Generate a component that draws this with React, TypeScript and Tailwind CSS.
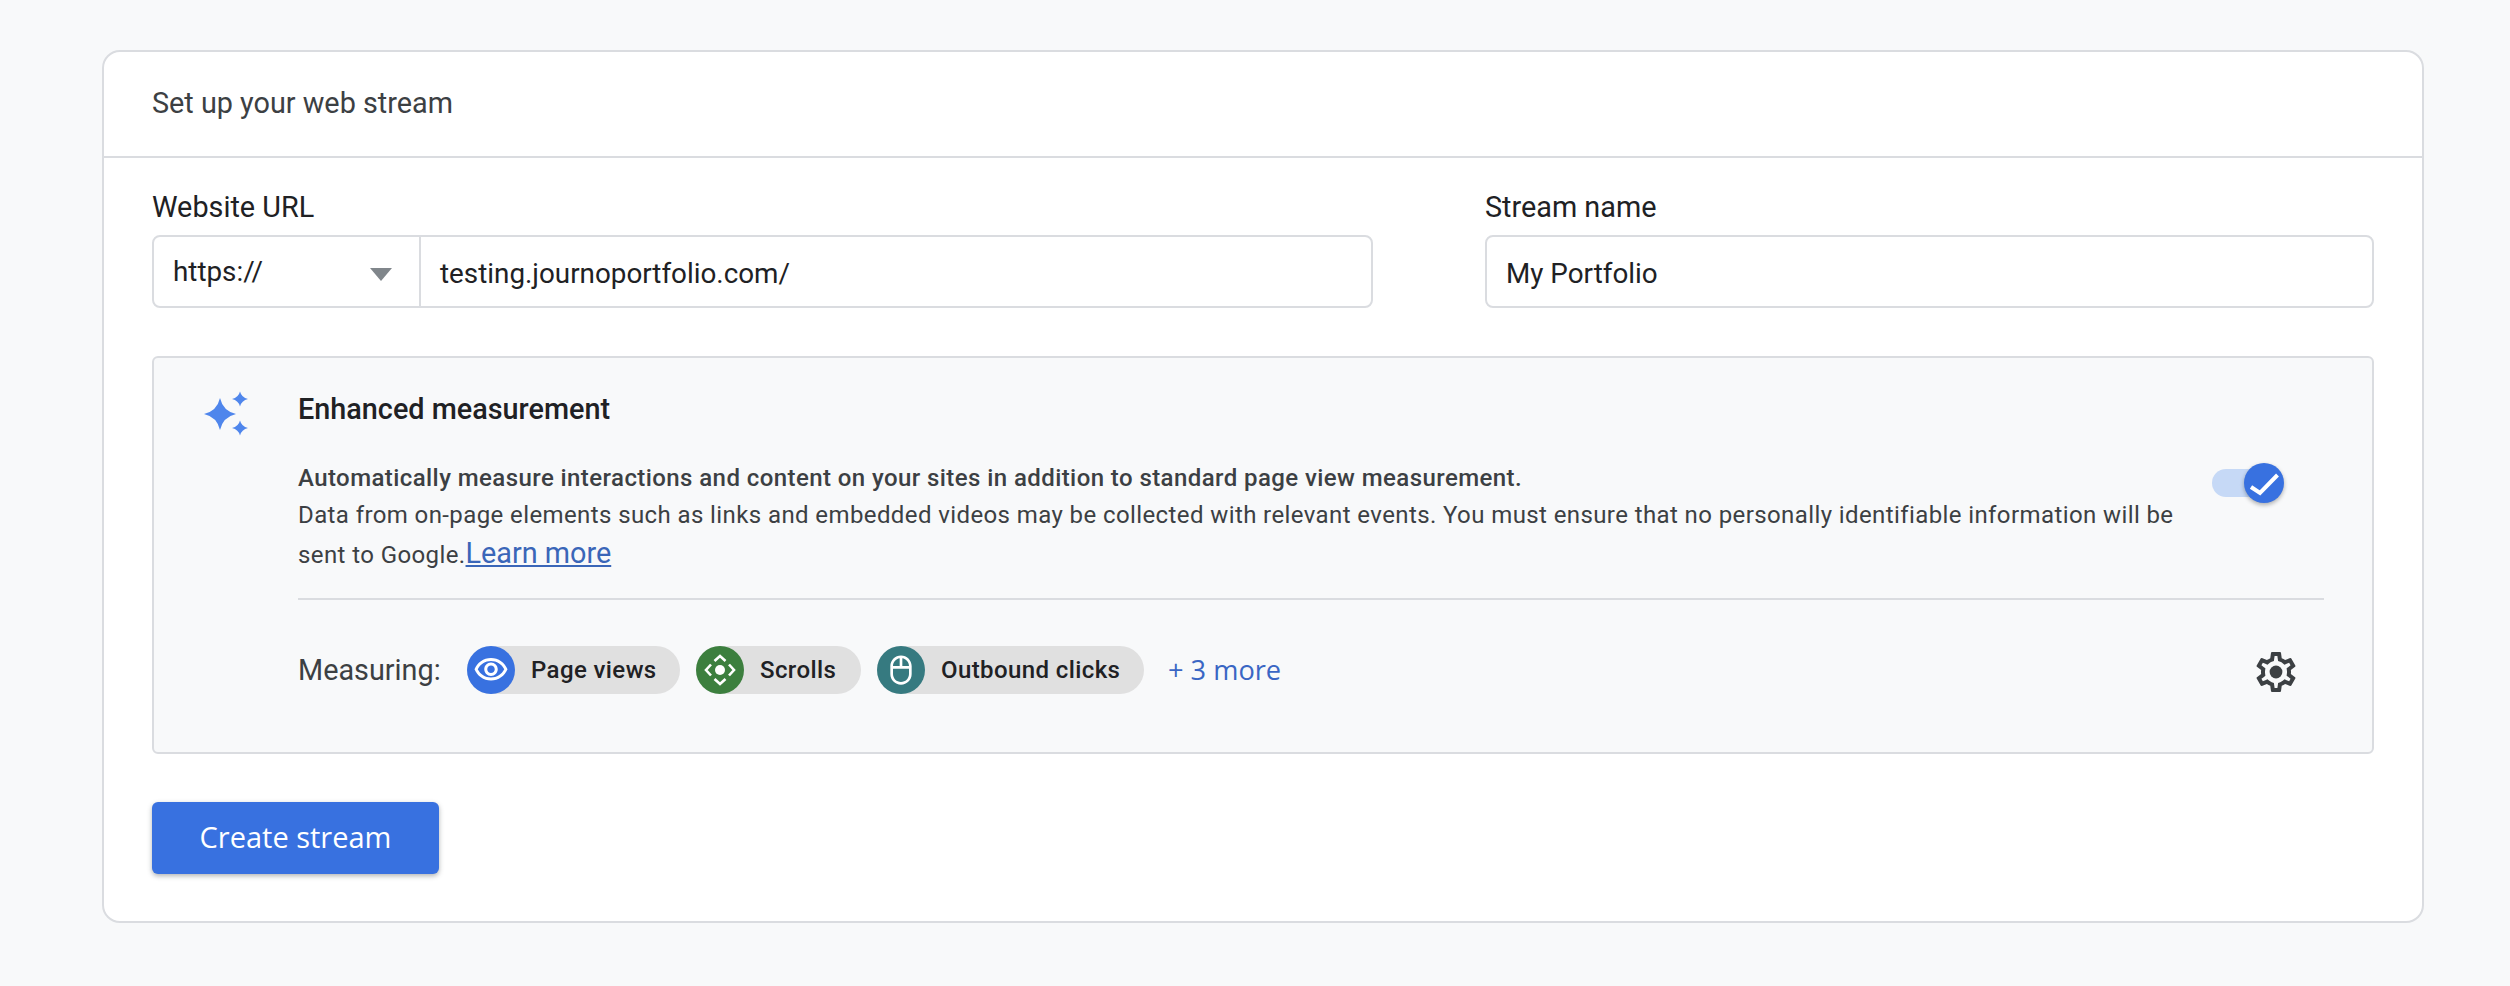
import React from "react";

const roboto = "font-['Roboto',sans-serif]";

function Chip({ color, label, width, children }: { color: string; label: string; width: string; children: React.ReactNode }) {
  return (
    <div className={`flex h-[48px] items-center rounded-full bg-[#e0e0e0] ${width}`}>
      <div className={`flex h-[48px] w-[48px] shrink-0 items-center justify-center rounded-full ${color}`}>{children}</div>
      <span className="ml-[16px] text-[24px] leading-[48px] font-medium tracking-[0.4px] whitespace-nowrap text-[#202124]">{label}</span>
    </div>
  );
}

export default function App() {
  return (
    <div className={`min-h-[986px] bg-[#f8f9fa] pt-[50px] pl-[102px] ${roboto}`}>
      <div className="h-[873px] w-[2322px] rounded-[18px] border-2 border-[#dadce0] bg-white">
        <div className="flex h-[106px] items-center border-b-2 border-[#dadce0] pr-[46px] pl-[48px] text-[28.8px] text-[#3c4043]">
          Set up your web stream
        </div>
        <div className="pr-[46px] pl-[48px]">
          <div className="flex gap-[112px] pt-[30px]">
            <div className="w-[1221px]">
              <div className="h-[38px] text-[28.8px] leading-[38px] text-[#202124]">Website URL</div>
              <div className="mt-[9px] flex h-[73px] rounded-[8px] border-2 border-[#dadce0] text-[27.8px] text-[#202124]">
                <div className="flex w-[267px] items-center justify-between border-r-2 border-[#dadce0] pt-[1px] pr-[27px] pl-[19px]">
                  <span>https://</span>
                  <svg width="22" height="13" viewBox="0 0 22 13" className="mt-[4px]"><path d="M0 0h22L11 13z" fill="#80868b" /></svg>
                </div>
                <div className="flex flex-1 items-center pt-[5px] pl-[19px]">testing.journoportfolio.com/</div>
              </div>
            </div>
            <div className="w-[889px]">
              <div className="h-[38px] text-[28.8px] leading-[38px] text-[#202124]">Stream name</div>
              <div className="mt-[9px] flex h-[73px] items-center rounded-[8px] border-2 border-[#dadce0] pt-[5px] pl-[19px] text-[27.8px] text-[#202124]">My Portfolio</div>
            </div>
          </div>

          <div className="mt-[48px] flex h-[398px] w-[2222px] rounded-[6px] border-2 border-[#dadce0] bg-[#f8f9fa]">
            <div className="w-[144px] shrink-0 pt-[33px] pl-[50px]">
              <svg width="44" height="46" viewBox="0 0 44 46" fill="#4f86ec">
                <path d="M16 7Q19 20 32 23Q19 26 16 39Q13 26 0 23Q13 20 16 7Z" />
                <path d="M36 0.5Q37.5 6.5 44 8Q37.5 9.5 36 15.5Q34.5 9.5 28 8Q34.5 6.5 36 0.5Z" />
                <path d="M36 29.5Q37.5 35.5 44 37Q37.5 38.5 36 44.5Q34.5 38.5 28 37Q34.5 35.5 36 29.5Z" />
              </svg>
            </div>
            <div className="flex-1 pr-[48px]">
              <div className="pt-[35px] text-[28.8px] leading-[32px] font-medium text-[#202124]">Enhanced measurement</div>
              <div className="mt-[35px] flex justify-between">
                <div className="w-[1877px] text-[24px] tracking-[0.4px] text-[#3c4043]">
                  <div className="leading-[36px] font-medium tracking-[0.42px]">Automatically measure interactions and content on your sites in addition to standard page view measurement.</div>
                  <div className="leading-[38px]">
                    Data from on-page elements such as links and embedded videos may be collected with relevant events. You must ensure that no personally identifiable information will be sent to Google.
                    <a className="text-[28.8px] tracking-normal text-[#3a66b8] underline">Learn more</a>
                  </div>
                </div>
                <div className="relative mt-[9px] mr-[54px] h-[28px] w-[58px] shrink-0 rounded-full bg-[#c6d9f6]">
                  <div className="absolute top-[-6px] right-[-14px] flex h-[40px] w-[40px] items-center justify-center rounded-full bg-[#3871e0] shadow-[0_2px_4px_rgba(0,0,0,0.3)]">
                    <svg width="40" height="40" viewBox="0 0 40 40"><path d="M7 24L16 30L33.5 12" fill="none" stroke="white" strokeWidth="4" /></svg>
                  </div>
                </div>
              </div>
              <div className="mt-[24px] h-[2px] bg-[#dadce0]"></div>
              <div className="mt-[46px] flex h-[48px] items-center">
                <span className="mt-[2px] w-[169px] text-[28.8px] text-[#3c4043]">Measuring:</span>
                <div className="flex gap-[16px]">
                  <Chip color="bg-[#3871e0]" label="Page views" width="w-[213px]">
                    <svg width="36" height="36" viewBox="0 0 24 24" fill="white"><path d="M12 6c3.79 0 7.17 2.13 8.82 5.5C19.17 14.87 15.79 17 12 17s-7.17-2.13-8.82-5.5C4.83 8.13 8.21 6 12 6m0-2C7 4 2.73 7.11 1 11.5 2.73 15.89 7 19 12 19s9.27-3.11 11-7.5C21.27 7.11 17 4 12 4zm0 5c1.38 0 2.5 1.12 2.5 2.5S13.38 14 12 14s-2.5-1.12-2.5-2.5S10.62 9 12 9m0-2c-2.48 0-4.5 2.02-4.5 4.5S9.52 16 12 16s4.5-2.02 4.5-4.5S14.48 7 12 7z" /></svg>
                  </Chip>
                  <Chip color="bg-[#3c7f3e]" label="Scrolls" width="w-[165px]">
                    <svg width="36" height="36" viewBox="0 0 36 36" fill="none" stroke="white" strokeWidth="2.6">
                      <path d="M12.5 9L18 4L23.5 9" />
                      <path d="M12.5 27L18 32L23.5 27" />
                      <path d="M9 12.5L4 18L9 23.5" />
                      <path d="M27 12.5L32 18L27 23.5" />
                      <circle cx="18" cy="18" r="5" fill="white" stroke="none" />
                    </svg>
                  </Chip>
                  <Chip color="bg-[#367a80]" label="Outbound clicks" width="w-[267px]">
                    <svg width="32" height="32" viewBox="0 0 24 24" fill="white"><path d="M20 9c-.04-4.39-3.6-7.93-8-7.93S4.04 4.61 4 9v6c0 4.42 3.58 8 8 8s8-3.58 8-8V9zm-2 0h-5V3.16c2.81.47 4.96 2.9 5 5.84zm-7-5.84V9H6c.04-2.94 2.19-5.37 5-5.84zM18 15c0 3.31-2.69 6-6 6s-6-2.69-6-6v-4h12v4z" /></svg>
                  </Chip>
                </div>
                <span className="ml-[24px] font-['Open_Sans',sans-serif] text-[27.2px] text-[#3a66c4]">+ 3 more</span>
                <div className="mt-[4px] mr-[24px] ml-auto">
                  <svg width="48" height="48" viewBox="0 0 24 24" fill="#3c4043"><path d="M19.43 12.98c.04-.32.07-.64.07-.98 0-.34-.03-.66-.07-.98l2.11-1.65c.19-.15.24-.42.12-.64l-2-3.46c-.09-.16-.26-.25-.44-.25-.06 0-.12.01-.17.03l-2.49 1c-.52-.4-1.08-.73-1.69-.98l-.38-2.65C14.46 2.18 14.25 2 14 2h-4c-.25 0-.46.18-.49.42l-.38 2.65c-.61.25-1.17.59-1.69.98l-2.49-1c-.06-.02-.12-.03-.18-.03-.17 0-.34.09-.43.25l-2 3.46c-.13.22-.07.49.12.64l2.11 1.65c-.04.32-.07.65-.07.98 0 .33.03.66.07.98l-2.11 1.65c-.19.15-.24.42-.12.64l2 3.46c.09.16.26.25.44.25.06 0 .12-.01.17-.03l2.49-1c.52.4 1.08.73 1.69.98l.38 2.65c.03.24.24.42.49.42h4c.25 0 .46-.18.49-.42l.38-2.65c.61-.25 1.17-.59 1.69-.98l2.49 1c.06.02.12.03.18.03.17 0 .34-.09.43-.25l2-3.46c.12-.22.07-.49-.12-.64l-2.11-1.65zm-1.98-1.71c.04.31.05.52.05.73 0 .21-.02.43-.05.73l-.14 1.13.89.7 1.08.84-.7 1.21-1.27-.51-1.04-.42-.9.68c-.43.32-.84.56-1.25.73l-1.06.43-.16 1.13-.2 1.35h-1.4l-.19-1.35-.16-1.13-1.06-.43c-.43-.18-.83-.41-1.23-.71l-.91-.7-1.06.43-1.27.51-.7-1.21 1.08-.84.89-.7-.14-1.13c-.03-.31-.05-.54-.05-.74s.02-.43.05-.73l.14-1.13-.89-.7-1.08-.84.7-1.21 1.27.51 1.04.42.9-.68c.43-.32.84-.56 1.25-.73l1.06-.43.16-1.13.2-1.35h1.39l.19 1.35.16 1.13 1.06.43c.43.18.83.41 1.23.71l.91.7 1.06-.43 1.27-.51.7 1.21-1.07.85-.89.7.14 1.13z" /><circle cx="12" cy="12" r="3.2" /></svg>
                </div>
              </div>
            </div>
          </div>

          <button className="mt-[48px] flex h-[72px] w-[287px] items-center justify-center rounded-[6px] bg-[#3871e0] pb-[2px] font-['Open_Sans',sans-serif] text-[29px] text-white shadow-[0_2px_5px_rgba(60,64,67,0.4)]">
            Create stream
          </button>
        </div>
      </div>
    </div>
  );
}
